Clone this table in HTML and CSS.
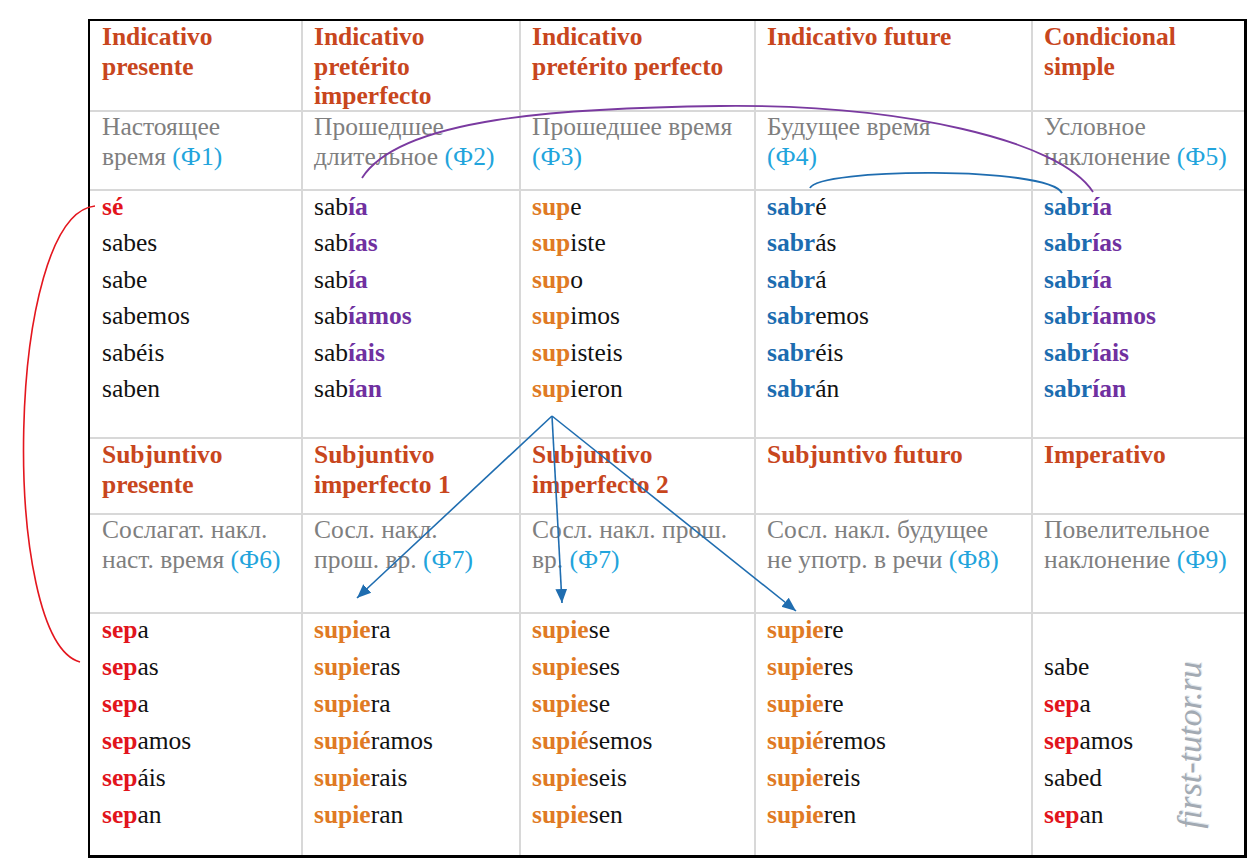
FILE: index.html
```html
<!DOCTYPE html>
<html lang="es">
<head>
<meta charset="utf-8">
<title>Saber — conjugación</title>
<link rel="stylesheet" href="styles.css">
</head>
<body>
<div class="page">
  <div class="table">
    <div class="cell head first">Indicativo<br>presente</div>
    <div class="cell head">Indicativo<br>pretérito<br>imperfecto</div>
    <div class="cell head">Indicativo<br>pretérito perfecto</div>
    <div class="cell head">Indicativo future</div>
    <div class="cell head">Condicional<br>simple</div>

    <div class="cell sub first row">Настоящее<br>время <span class="f">(Ф1)</span></div>
    <div class="cell sub row">Прошедшее<br>длительное <span class="f">(Ф2)</span></div>
    <div class="cell sub row">Прошедшее время<br><span class="f">(Ф3)</span></div>
    <div class="cell sub row">Будущее время<br><span class="f">(Ф4)</span></div>
    <div class="cell sub row">Условное<br>наклонение <span class="f">(Ф5)</span></div>

    <div class="cell data s1 first row">
      <div class="w"><span class="r">sé</span></div>
      <div class="w">sabes</div>
      <div class="w">sabe</div>
      <div class="w">sabemos</div>
      <div class="w">sabéis</div>
      <div class="w">saben</div>
    </div>
    <div class="cell data s1 row">
      <div class="w">sab<span class="p">ía</span></div>
      <div class="w">sab<span class="p">ías</span></div>
      <div class="w">sab<span class="p">ía</span></div>
      <div class="w">sab<span class="p">íamos</span></div>
      <div class="w">sab<span class="p">íais</span></div>
      <div class="w">sab<span class="p">ían</span></div>
    </div>
    <div class="cell data s1 row">
      <div class="w"><span class="o">sup</span>e</div>
      <div class="w"><span class="o">sup</span>iste</div>
      <div class="w"><span class="o">sup</span>o</div>
      <div class="w"><span class="o">sup</span>imos</div>
      <div class="w"><span class="o">sup</span>isteis</div>
      <div class="w"><span class="o">sup</span>ieron</div>
    </div>
    <div class="cell data s1 row">
      <div class="w"><span class="b">sabr</span>é</div>
      <div class="w"><span class="b">sabr</span>ás</div>
      <div class="w"><span class="b">sabr</span>á</div>
      <div class="w"><span class="b">sabr</span>emos</div>
      <div class="w"><span class="b">sabr</span>éis</div>
      <div class="w"><span class="b">sabr</span>án</div>
    </div>
    <div class="cell data s1 row">
      <div class="w"><span class="b">sabr</span><span class="p">ía</span></div>
      <div class="w"><span class="b">sabr</span><span class="p">ías</span></div>
      <div class="w"><span class="b">sabr</span><span class="p">ía</span></div>
      <div class="w"><span class="b">sabr</span><span class="p">íamos</span></div>
      <div class="w"><span class="b">sabr</span><span class="p">íais</span></div>
      <div class="w"><span class="b">sabr</span><span class="p">ían</span></div>
    </div>

    <div class="cell head first row">Subjuntivo<br>presente</div>
    <div class="cell head row">Subjuntivo<br>imperfecto 1</div>
    <div class="cell head row">Subjuntivo<br>imperfecto 2</div>
    <div class="cell head row">Subjuntivo futuro</div>
    <div class="cell head row">Imperativo</div>

    <div class="cell sub first row">Сослагат. накл.<br>наст. время <span class="f">(Ф6)</span></div>
    <div class="cell sub row">Сосл. накл.<br>прош. вр. <span class="f">(Ф7)</span></div>
    <div class="cell sub row">Сосл. накл. прош.<br>вр. <span class="f">(Ф7)</span></div>
    <div class="cell sub row">Сосл. накл. будущее<br>не употр. в речи <span class="f">(Ф8)</span></div>
    <div class="cell sub row">Повелительное<br>наклонение <span class="f">(Ф9)</span></div>

    <div class="cell data s2 first row">
      <div class="w"><span class="r">sep</span>a</div>
      <div class="w"><span class="r">sep</span>as</div>
      <div class="w"><span class="r">sep</span>a</div>
      <div class="w"><span class="r">sep</span>amos</div>
      <div class="w"><span class="r">sep</span>áis</div>
      <div class="w"><span class="r">sep</span>an</div>
    </div>
    <div class="cell data s2 row">
      <div class="w"><span class="o">supie</span>ra</div>
      <div class="w"><span class="o">supie</span>ras</div>
      <div class="w"><span class="o">supie</span>ra</div>
      <div class="w"><span class="o">supié</span>ramos</div>
      <div class="w"><span class="o">supie</span>rais</div>
      <div class="w"><span class="o">supie</span>ran</div>
    </div>
    <div class="cell data s2 row">
      <div class="w"><span class="o">supie</span>se</div>
      <div class="w"><span class="o">supie</span>ses</div>
      <div class="w"><span class="o">supie</span>se</div>
      <div class="w"><span class="o">supié</span>semos</div>
      <div class="w"><span class="o">supie</span>seis</div>
      <div class="w"><span class="o">supie</span>sen</div>
    </div>
    <div class="cell data s2 row">
      <div class="w"><span class="o">supie</span>re</div>
      <div class="w"><span class="o">supie</span>res</div>
      <div class="w"><span class="o">supie</span>re</div>
      <div class="w"><span class="o">supié</span>remos</div>
      <div class="w"><span class="o">supie</span>reis</div>
      <div class="w"><span class="o">supie</span>ren</div>
    </div>
    <div class="cell data s2 row">
      <div class="w"></div>
      <div class="w">sabe</div>
      <div class="w"><span class="r">sep</span>a</div>
      <div class="w"><span class="r">sep</span>amos</div>
      <div class="w">sabed</div>
      <div class="w"><span class="r">sep</span>an</div>
    </div>
  </div>

  <svg class="overlay" width="1253" height="866" viewBox="0 0 1253 866" aria-hidden="true">
    <defs>
      <marker id="ah" viewBox="0 0 10 10" refX="10" refY="5" markerWidth="14" markerHeight="14" markerUnits="userSpaceOnUse" orient="auto">
        <path d="M0,0.8 L10,5 L0,9.2 z" fill="#1f6db0"/>
      </marker>
    </defs>
    <path d="M95,206 C5,215 0,640 80,662" fill="none" stroke="#e4161e" stroke-width="1.6"/>
    <path d="M362,178 C400,118 560,108 720,106 C900,104 1060,140 1093,192" fill="none" stroke="#7a3aa0" stroke-width="1.8"/>
    <path d="M810,188 C818,168 1048,166 1062,193" fill="none" stroke="#1f6db0" stroke-width="1.8"/>
    <line x1="552" y1="416" x2="357" y2="598" stroke="#1f6db0" stroke-width="1.6" marker-end="url(#ah)"/>
    <line x1="552" y1="416" x2="562" y2="603" stroke="#1f6db0" stroke-width="1.6" marker-end="url(#ah)"/>
    <line x1="552" y1="416" x2="796" y2="611" stroke="#1f6db0" stroke-width="1.6" marker-end="url(#ah)"/>
  </svg>

  <div class="watermark">first-tutor.ru</div>
</div>
</body>
</html>
```

FILE: styles.css
```css
body {
  margin: 0;
  background: #fff;
  font-family: "Liberation Serif", "Times New Roman", serif;
}

.page {
  position: relative;
  width: 1253px;
  height: 866px;
  padding: 19px 0 0 88px;
  box-sizing: border-box;
}

.table {
  display: grid;
  width: 1159px;
  box-sizing: border-box;
  border: 2px solid #000;
  border-right-width: 3px;
  border-bottom-width: 3px;
  grid-template-columns: 211px 218px 235px 277px 213px;
  grid-template-rows: 89px 79px 248px 76px 99px 243px;
  background: #fff;
}

.cell {
  box-sizing: border-box;
  padding: 0 8px 0 11px;
  border-left: 2px solid #d8d8d8;
  font-size: 25.5px;
  overflow: hidden;
}

.cell.first {
  border-left: none;
  padding-left: 12px;
}

.cell.row {
  border-top: 2px solid #d8d8d8;
}

.head {
  font-weight: bold;
  color: #c8461d;
  line-height: 29.5px;
  padding-top: 1px;
}

.sub {
  color: #7f7f7f;
  line-height: 30px;
  padding-top: 0;
}

.f {
  color: #22a4dc;
}

.data {
  color: #111;
}

.w {
  white-space: nowrap;
}

.s1 .w {
  height: 36.4px;
  line-height: 36.4px;
}

.s2 .w {
  height: 37px;
  line-height: 37px;
}

.s1 .w:first-child {
  margin-top: -2px;
}

.s2 .w:first-child {
  margin-top: -3px;
}

.r { color: #e2141c; font-weight: bold; }
.o { color: #e07a24; font-weight: bold; }
.p { color: #7030a0; font-weight: bold; }
.b { color: #1c6cb0; font-weight: bold; }

.overlay {
  position: absolute;
  left: 0;
  top: 0;
  pointer-events: none;
}

.watermark {
  position: absolute;
  left: 1190px;
  top: 745px;
  transform: translate(-50%, -50%) rotate(-90deg);
  font-family: "Liberation Serif", "Times New Roman", serif;
  font-style: italic;
  font-size: 34px;
  color: #a2aab3;
  white-space: nowrap;
  text-shadow: 1px 1px 0 #e2e6ea;
}
```
